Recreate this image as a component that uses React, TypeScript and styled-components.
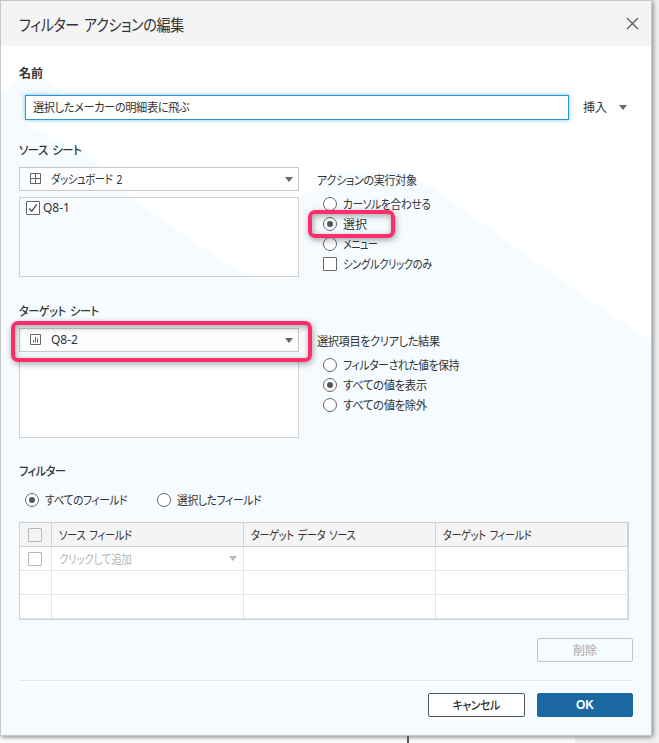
import React from "react";
import styled, { createGlobalStyle, css } from "styled-components";

const GlobalStyle = createGlobalStyle`
  *, *::before, *::after { box-sizing: border-box; }
  html, body { margin: 0; height: 743px; overflow: hidden; background: #f2f2f2; }
  body {
    font-family: "Noto Sans", "Noto Sans CJK JP", sans-serif;
    font-size: 12px;
    color: #333;
  }
`;

const Desktop = styled.div`
  display: flex;
  flex-direction: column;
  width: 659px;
  height: 743px;
`;

const Dialog = styled.div`
  position: relative;
  z-index: 1;
  display: flex;
  flex-direction: column;
  width: 652px;
  height: 736px;
  flex: none;
  border: 1px solid #c6c8c9;
  background: #fff;
  box-shadow: 1px 1px 5px rgba(0, 0, 0, 0.5);
`;

const Canvas = styled.div`
  display: flex;
  width: 575px;
  height: 7px;
  padding-left: 407px;
  background: #fff;
`;

const CanvasRule = styled.div`
  width: 2px;
  height: 7px;
  background: #555;
  position: relative;
  z-index: 2;
`;

const Header = styled.header`
  display: flex;
  align-items: center;
  justify-content: space-between;
  flex: none;
  height: 45px;
  padding: 0 12px 0 18px;
  background: #f4f4f4;
`;

const Body = styled.main`
  position: relative;
  display: flex;
  flex-direction: column;
  flex: 1;
  padding: 0 18px;
  isolation: isolate;

  &::before {
    content: "";
    position: absolute;
    z-index: -1;
    inset: 0;
    background: #f5fbfe;
    clip-path: polygon(
      0 47px, 22px 32px, 42px 32px, 62px 46px, 24px 49px, 21px 76px, 49px 92px,
      81px 105px, 97px 118px, 131px 153px, 244px 230px, 298px 230px, 298px 152px,
      338px 126px, 400px 126px, 432px 142px, 571px 242px, 650px 295px,
      650px 100%, 0 100%
    );
  }
`;

/* $scale condenses the kana, which the UI typeface draws narrower than full width. */
const Text = styled.span<{
  $scale?: number;
  $size?: number;
  $weight?: number;
  $color?: string;
  $origin?: string;
}>`
  display: inline-block;
  font-size: ${(p) => p.$size ?? 12}px;
  font-weight: ${(p) => p.$weight ?? 400};
  letter-spacing: ${(p) => (p.$scale ? -0.4 : 0)}px;
  word-spacing: 2px;
  color: ${(p) => p.$color ?? "#333"};
  line-height: 20px;
  white-space: pre;
  font-feature-settings: "palt";
  transform: translateY(1px) scaleX(${(p) => p.$scale ?? 1});
  transform-origin: ${(p) => p.$origin ?? "left"} center;
`;

const LatinText = styled.span`
  font-size: 12px;
  line-height: 20px;
`;

const SectionTitle = styled(Text)<{ $top: number }>`
  display: block;
  height: 20px;
  margin-top: ${(p) => p.$top}px;
`;

const NameRow = styled.div`
  display: flex;
  align-items: center;
  height: 24px;
  margin: 12px 0 0 6px;
`;

const NameField = styled.div`
  display: flex;
  align-items: center;
  width: 544px;
  height: 25px;
  margin-right: 14px;
  padding-left: 7px;
  border: 1px solid #2d93d8;
  background: #fff;
  box-shadow: 0 0 4px rgba(65, 170, 230, 0.75);
`;

const InsertButton = styled.div`
  display: flex;
  align-items: center;
  gap: 12px;
`;

const Caret = styled.span<{ $light?: boolean }>`
  width: 0;
  height: 0;
  border: 4px solid transparent;
  border-top: 5px solid ${(p) => (p.$light ? "#b9b9b9" : "#666")};
  border-bottom: 0;
`;

const Columns = styled.div<{ $top: number }>`
  display: grid;
  grid-template-columns: 280px 1fr;
  column-gap: 18px;
  height: 110px;
  margin-top: ${(p) => p.$top}px;
`;

const Picker = styled.div`
  display: flex;
  flex-direction: column;
  gap: 6px;
`;

const Select = styled.div`
  position: relative;
  display: flex;
  align-items: center;
  height: 24px;
  padding: 0 5px 0 10px;
  border: 1px solid #c9c9c9;
  background: rgba(255, 255, 255, 0.6);

  & > svg { margin-right: 9px; }
  & > ${Caret} { margin-left: auto; }
`;

const SheetList = styled.div<{ $solid?: boolean }>`
  display: flex;
  align-items: flex-start;
  height: 80px;
  padding: 0 6px;
  border: 1px solid #d0d0d0;
  background: ${(p) => (p.$solid ? "#fff" : "transparent")};
`;

const Options = styled.div`
  display: flex;
  flex-direction: column;
  align-items: flex-start;
  padding-top: 3px;
`;

const OptionList = styled.div<{ $top: number }>`
  display: flex;
  flex-direction: column;
  padding-left: 6px;
  margin-top: ${(p) => p.$top}px;
`;

const Choice = styled.div<{ $gap?: number }>`
  position: relative;
  display: flex;
  align-items: center;
  gap: ${(p) => p.$gap ?? 6}px;
  height: 20px;
`;

const Radio = styled.span<{ $on?: boolean }>`
  display: flex;
  align-items: center;
  justify-content: center;
  width: 14px;
  height: 14px;
  flex: none;
  border: 1px solid #666;
  border-radius: 50%;
  background: #fff;

  ${(p) =>
    p.$on &&
    css`
      &::after {
        content: "";
        width: 6px;
        height: 6px;
        border-radius: 50%;
        background: #555;
      }
    `}
`;

const Check = styled.span<{ $muted?: boolean }>`
  display: flex;
  align-items: center;
  justify-content: center;
  width: 14px;
  height: 14px;
  flex: none;
  border: 1px solid ${(p) => (p.$muted ? "#b8b8b8" : "#666")};
  border-radius: 1px;
  background: ${(p) => (p.$muted ? "transparent" : "#fff")};
`;

const Highlight = styled.span<{ $x: number; $y: number; $w: number; $h: number }>`
  position: absolute;
  z-index: 3;
  left: ${(p) => p.$x}px;
  top: ${(p) => p.$y}px;
  width: ${(p) => p.$w}px;
  height: ${(p) => p.$h}px;
  border: 4px solid #fd2d6c;
  border-radius: 7px;
  box-shadow: 1px 2px 6px rgba(0, 0, 0, 0.35), inset 1px 2px 6px rgba(0, 0, 0, 0.35);
`;

const FilterModes = styled.div`
  display: flex;
  height: 20px;
  margin: 9px 0 0 6px;
`;

const ModeSlot = styled.div`
  width: 132px;
`;

const Table = styled.div`
  width: 610px;
  height: 98px;
  margin-top: 12px;
  border: 1px solid #d0d0d0;
  background: #fff;
`;

const TableRow = styled.div<{ $head?: boolean }>`
  display: grid;
  grid-template-columns: 32px 192px 192px 192px;
  height: 24px;
  background: ${(p) => (p.$head ? "#f4f4f4" : "transparent")};

  & > div {
    border-right: 1px solid ${(p) => (p.$head ? "#d0d0d0" : "#e6e6e6")};
    border-bottom: 1px solid ${(p) => (p.$head ? "#d0d0d0" : "#e6e6e6")};
  }
`;

const Cell = styled.div<{ $check?: boolean }>`
  display: flex;
  align-items: center;
  justify-content: space-between;
  padding: ${(p) => (p.$check ? "0 0 0 8px" : "0 6px 0 7px")};
`;

const Actions = styled.div<{ $top: number }>`
  display: flex;
  justify-content: flex-end;
  gap: 12px;
  margin-top: ${(p) => p.$top}px;
`;

const Button = styled.div<{ $kind: "disabled" | "plain" | "primary" }>`
  display: flex;
  align-items: center;
  justify-content: center;
  width: ${(p) => (p.$kind === "plain" ? 97 : 96)}px;
  height: 24px;
  border: 1px solid
    ${(p) => ({ disabled: "#c3c3c3", plain: "#555", primary: "#1b68a1" })[p.$kind]};
  border-radius: 2px;
  background: ${(p) => (p.$kind === "primary" ? "#1b68a1" : p.$kind === "plain" ? "#fff" : "transparent")};
`;

const OkText = styled.span`
  font: bold 12px "Liberation Sans", sans-serif;
  color: #fff;
`;

const Divider = styled.div`
  height: 4px;
  margin-top: 18px;
  border-top: 1px solid #e4e5e6;
  background: #fff;
`;

const CloseIcon = () => (
  <svg width="13" height="13" viewBox="0 0 13 13" stroke="#555" strokeWidth="1.2" fill="none">
    <path d="M1 1L12 12M12 1L1 12" />
  </svg>
);

const DashboardIcon = () => (
  <svg width="12" height="12" viewBox="0 0 12 12" stroke="#666" fill="none">
    <path d="M.5 .5H10.5V10.5H.5ZM5.5 .5V10.5M.5 5.5H10.5" />
  </svg>
);

const SheetIcon = () => (
  <svg width="12" height="12" viewBox="0 0 12 12" stroke="#666" fill="none">
    <path d="M.5 .5H10.5V10.5H.5ZM3.5 6V8.5M5.5 3V8.5M7.5 4.5V8.5" />
  </svg>
);

const TickIcon = () => (
  <svg width="10" height="10" viewBox="0 0 10 10" stroke="#555" strokeWidth="1.5" fill="none">
    <path d="M1.2 5.4L3.8 8.2L8.8 1.4" />
  </svg>
);

type Option = { label: string; scale?: number; on?: boolean; box?: boolean; marked?: boolean };

const runOptions: Option[] = [
  { label: "カーソルを合わせる", scale: 0.894 },
  { label: "選択", on: true, marked: true },
  { label: "メニュー", scale: 0.825 },
  { label: "シングルクリックのみ", scale: 0.856, box: true },
];

const clearOptions: Option[] = [
  { label: "フィルターされた値を保持", scale: 0.9 },
  { label: "すべての値を表示", scale: 0.95, on: true },
  { label: "すべての値を除外", scale: 0.95 },
];

const OptionRow = ({ option }: { option: Option }) => (
  <Choice>
    {option.box ? <Check /> : <Radio $on={option.on} />}
    <Text $scale={option.scale}>{option.label}</Text>
    {option.marked && <Highlight $x={-15} $y={-4} $w={87} $h={28} />}
  </Choice>
);

export default function App() {
  return (
    <>
      <GlobalStyle />
      <Desktop>
        <Dialog>
          <Header>
            <Text $size={16} $scale={0.88}>フィルター アクションの編集</Text>
            <CloseIcon />
          </Header>
          <Body>
            <SectionTitle $top={17} $weight={700}>名前</SectionTitle>
            <NameRow>
              <NameField>
                <Text $scale={0.934}>選択したメーカーの明細表に飛ぶ</Text>
              </NameField>
              <InsertButton>
                <Text>挿入</Text>
                <Caret />
              </InsertButton>
            </NameRow>

            <SectionTitle $top={21} $weight={500} $scale={0.94}>ソース シート</SectionTitle>
            <Columns $top={7}>
              <Picker>
                <Select>
                  <DashboardIcon />
                  <Text $scale={0.857}>ダッシュボード 2</Text>
                  <Caret />
                </Select>
                <SheetList>
                  <Choice $gap={3}>
                    <Check><TickIcon /></Check>
                    <LatinText>Q8-1</LatinText>
                  </Choice>
                </SheetList>
              </Picker>
              <Options>
                <Text $scale={0.926}>アクションの実行対象</Text>
                <OptionList $top={4}>
                  {runOptions.map((o) => <OptionRow key={o.label} option={o} />)}
                </OptionList>
              </Options>
            </Columns>

            <SectionTitle $top={24} $weight={500} $scale={0.924}>ターゲット シート</SectionTitle>
            <Columns $top={7}>
              <Picker>
                <Select>
                  <SheetIcon />
                  <LatinText>Q8-2</LatinText>
                  <Caret />
                  <Highlight $x={-9} $y={-8} $w={301} $h={41} />
                </Select>
                <SheetList $solid />
              </Picker>
              <Options>
                <Text $scale={0.932}>選択項目をクリアした結果</Text>
                <OptionList $top={4}>
                  {clearOptions.map((o) => <OptionRow key={o.label} option={o} />)}
                </OptionList>
              </Options>
            </Columns>

            <SectionTitle $top={23} $weight={500} $scale={0.92}>フィルター</SectionTitle>
            <FilterModes>
              <ModeSlot>
                <Choice><Radio $on /><Text $scale={0.889}>すべてのフィールド</Text></Choice>
              </ModeSlot>
              <ModeSlot>
                <Choice><Radio /><Text $scale={0.9}>選択したフィールド</Text></Choice>
              </ModeSlot>
            </FilterModes>

            <Table>
              <TableRow $head>
                <Cell $check><Check $muted /></Cell>
                <Cell><Text $scale={0.857}>ソース フィールド</Text></Cell>
                <Cell><Text $scale={0.847}>ターゲット データ ソース</Text></Cell>
                <Cell><Text $scale={0.843}>ターゲット フィールド</Text></Cell>
              </TableRow>
              <TableRow>
                <Cell $check><Check $muted /></Cell>
                <Cell><Text $scale={0.88} $color="#b5b5b5">クリックして追加</Text><Caret $light /></Cell>
                <Cell />
                <Cell />
              </TableRow>
              {[0, 1].map((n) => (
                <TableRow key={n}><Cell /><Cell /><Cell /><Cell /></TableRow>
              ))}
            </Table>

            <Actions $top={18}>
              <Button $kind="disabled"><Text $weight={500} $color="#b5b5b5">削除</Text></Button>
            </Actions>
            <Divider />
            <Actions $top={9}>
              <Button $kind="plain">
                <Text $weight={500} $scale={0.9} $origin="center">キャンセル</Text>
              </Button>
              <Button $kind="primary"><OkText>OK</OkText></Button>
            </Actions>
          </Body>
        </Dialog>
        <Canvas><CanvasRule /></Canvas>
      </Desktop>
    </>
  );
}
